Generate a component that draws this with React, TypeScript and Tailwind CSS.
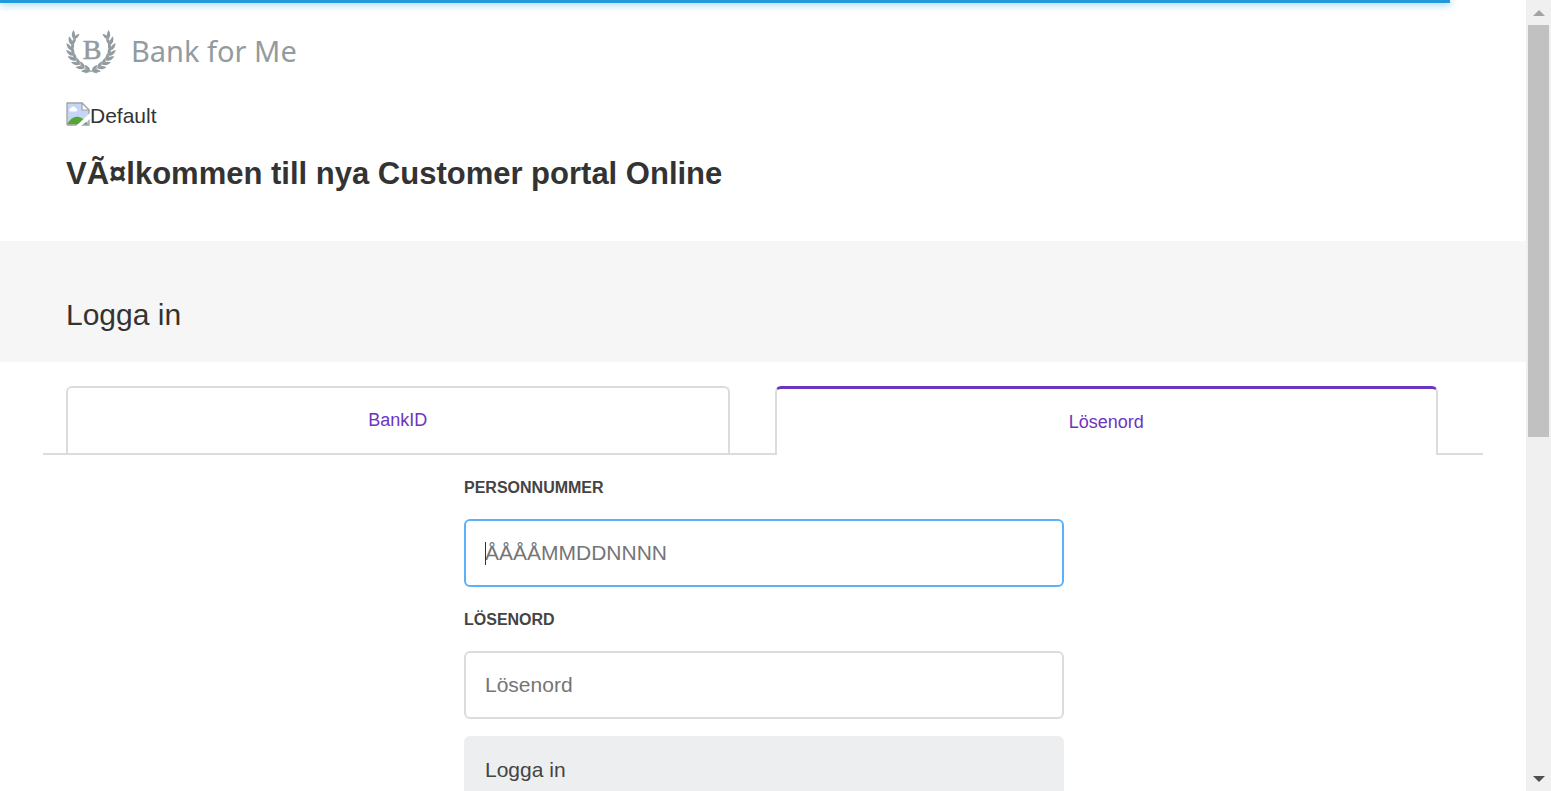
import React from 'react';

const LEAF = 'M0 0C-2.2 -2.4 -2.2 -5.400 0 -9C2.2 -5.400 2.2 -2.4 0 0Z';

const STEM = [[31, 44], [14, 40], [-1, 26], [8, 9]];

function stemPoint(t: number) {
  const u = 1 - t;
  const at = (k: number) =>
    u * u * u * STEM[0][k] + 3 * u * u * t * STEM[1][k] + 3 * u * t * t * STEM[2][k] + t * t * t * STEM[3][k];
  const slope = (k: number) =>
    u * u * (STEM[1][k] - STEM[0][k]) + 2 * u * t * (STEM[2][k] - STEM[1][k]) + t * t * (STEM[3][k] - STEM[2][k]);
  const angle = (Math.atan2(slope(0), -slope(1)) * 180) / Math.PI;
  return { x: at(0), y: at(1), angle };
}

const LEAF_STEPS = [0.14, 0.26, 0.38, 0.5, 0.62, 0.74, 0.86, 0.98];

function Branch() {
  return (
    <g>
      <path d="M31 44C14 40 -1 26 8 9" fill="none" stroke="currentColor" strokeWidth="0.8" />
      {LEAF_STEPS.map((t) => {
        const p = stemPoint(t);
        return (
          <g key={t} transform={`translate(${p.x} ${p.y}) rotate(${p.angle})`} fill="currentColor">
            <path d={LEAF} transform="rotate(-26)" />
            <path d={LEAF} transform="rotate(24) scale(0.9)" />
          </g>
        );
      })}
    </g>
  );
}

function Crest() {
  return (
    <svg viewBox="0 0 50 45" className="h-[45px] w-[50px] shrink-0" aria-hidden="true">
      <Branch />
      <g transform="translate(50 0) scale(-1 1)">
        <Branch />
      </g>
      <text x="26" y="30" textAnchor="middle" fontSize="28" fontFamily="Liberation Serif, serif" fill="currentColor" stroke="currentColor" strokeWidth="0.6">B</text>
    </svg>
  );
}

function BrokenImage() {
  return (
    <svg viewBox="0 0 24 24" className="size-6 shrink-0" aria-hidden="true">
      <path d="M1 1H16L23 8V23H1Z" fill="#c5d5f5" />
      <path d="M4 9.500a2 2 0 0 1 1-3.600a2.500 2.500 0 0 1 4.500 0a2 2 0 0 1 1 3.600Z" fill="#fff" />
      <path d="M1 22.500C4 17 8 14 13 15C17 16 20 19 22 22.500Z" fill="#54a733" />
      <path d="M1 23V1H16L23 8V23H1" fill="none" stroke="#a3a3a3" strokeWidth="1.300" />
      <path d="M24 11L10 24H15L24 17Z" fill="#fff" />
      <path d="M16 1V8H23Z" fill="#fff" stroke="#a3a3a3" strokeWidth="1.200" />
    </svg>
  );
}

function ScrollRail() {
  return (
    <div aria-hidden="true" className="flex w-[25px] shrink-0 flex-col items-center bg-[#f0f0f0]">
      <div className="flex h-[25px] shrink-0 items-center">
        <svg viewBox="0 0 12 6" className="h-1.5 w-3"><path d="M0 6L6 0L12 6Z" fill="#a3a3a3" /></svg>
      </div>
      <div className="min-h-0 flex-1">
        <div className="h-[55.6%] w-[21px] bg-[#c1c1c1]" />
      </div>
      <div className="flex h-[25px] shrink-0 items-center">
        <svg viewBox="0 0 12 6" className="h-1.5 w-3"><path d="M0 0L6 6L12 0Z" fill="#505050" /></svg>
      </div>
    </div>
  );
}

export default function App() {
  return (
    <div className="flex h-screen overflow-hidden bg-white font-['Liberation_Sans',Arial,sans-serif] text-[21px] leading-8 text-[#333]">
      <div className="relative min-w-0 flex-1 overflow-hidden">
        <div className="absolute top-0 left-0 h-[3px] w-[95%] bg-[#2299dd] shadow-[0_0_8px_#2299dd]" />

        <header className="mx-auto max-w-[1440px] px-[23px] pt-[29px] pb-[47px]">
          <a href="#" className="flex h-[45px] items-start gap-[15px] text-[#929ca0]">
            <Crest />
            <span className="font-['Noto_Sans',sans-serif] text-[29px] leading-[43px]">Bank for Me</span>
          </a>
          <div className="mt-[26px] flex h-8 items-start">
            <div className="pt-0.5"><BrokenImage /></div>
            <span>Default</span>
          </div>
          <h1 className="mt-[22px] text-[31px] leading-10 font-bold">VÃ¤lkommen till nya Customer portal Online</h1>
        </header>

        <section className="bg-[#f6f6f6]">
          <div className="mx-auto max-w-[1440px] px-[23px] pt-[54px] pb-[27px]">
            <h2 className="text-[30px] leading-10">Logga in</h2>
          </div>
        </section>

        <main className="mx-auto max-w-[1440px] pt-6">
          <div role="tablist" className="flex h-[69px] text-[18px] text-[#6c35c0]">
            <div className="w-[23px] border-b-2 border-[#dcdcdc]" />
            <div className="flex-1 border-b-2 border-[#dcdcdc]">
              <button type="button" role="tab" aria-selected="false" className="size-full rounded-t-md border-2 border-b-0 border-[#dcdcdc] pb-0.5">BankID</button>
            </div>
            <div className="w-[45px] border-b-2 border-[#dcdcdc]" />
            <div className="flex-1">
              <button type="button" role="tab" aria-selected="true" className="size-full rounded-t-md border-x-2 border-t-3 border-x-[#dcdcdc] border-t-[#6c35c0]">Lösenord</button>
            </div>
            <div className="w-[45px] border-b-2 border-[#dcdcdc]" />
          </div>

          <div className="pt-[17px] pl-0.5">
            <form className="mx-auto max-w-[600px]">
              <label htmlFor="pnr" className="block text-[16px] font-bold text-[#444]">PERSONNUMMER</label>
              <div className="relative mt-[15px]">
                <input id="pnr" type="text" placeholder="ÅÅÅÅMMDDNNNN" className="block h-[68px] w-full rounded-md border-2 border-[#5cb0f8] px-[19px] outline-none placeholder:text-[#757575]" />
                <span aria-hidden="true" className="absolute top-[23px] left-[21px] h-[23px] w-px bg-[#333]" />
              </div>
              <label htmlFor="pwd" className="mt-[17px] block text-[16px] font-bold text-[#444]">LÖSENORD</label>
              <input id="pwd" type="password" placeholder="Lösenord" className="mt-[15px] block h-[68px] w-full rounded-md border-2 border-[#dcdcdc] px-[19px] outline-none placeholder:text-[#757575]" />
              <button type="submit" className="mt-[17px] block h-[68px] w-full rounded-md bg-[#eceeef] px-[21px] text-left text-[#444]">Logga in</button>
            </form>
          </div>
        </main>
      </div>
      <ScrollRail />
    </div>
  );
}
